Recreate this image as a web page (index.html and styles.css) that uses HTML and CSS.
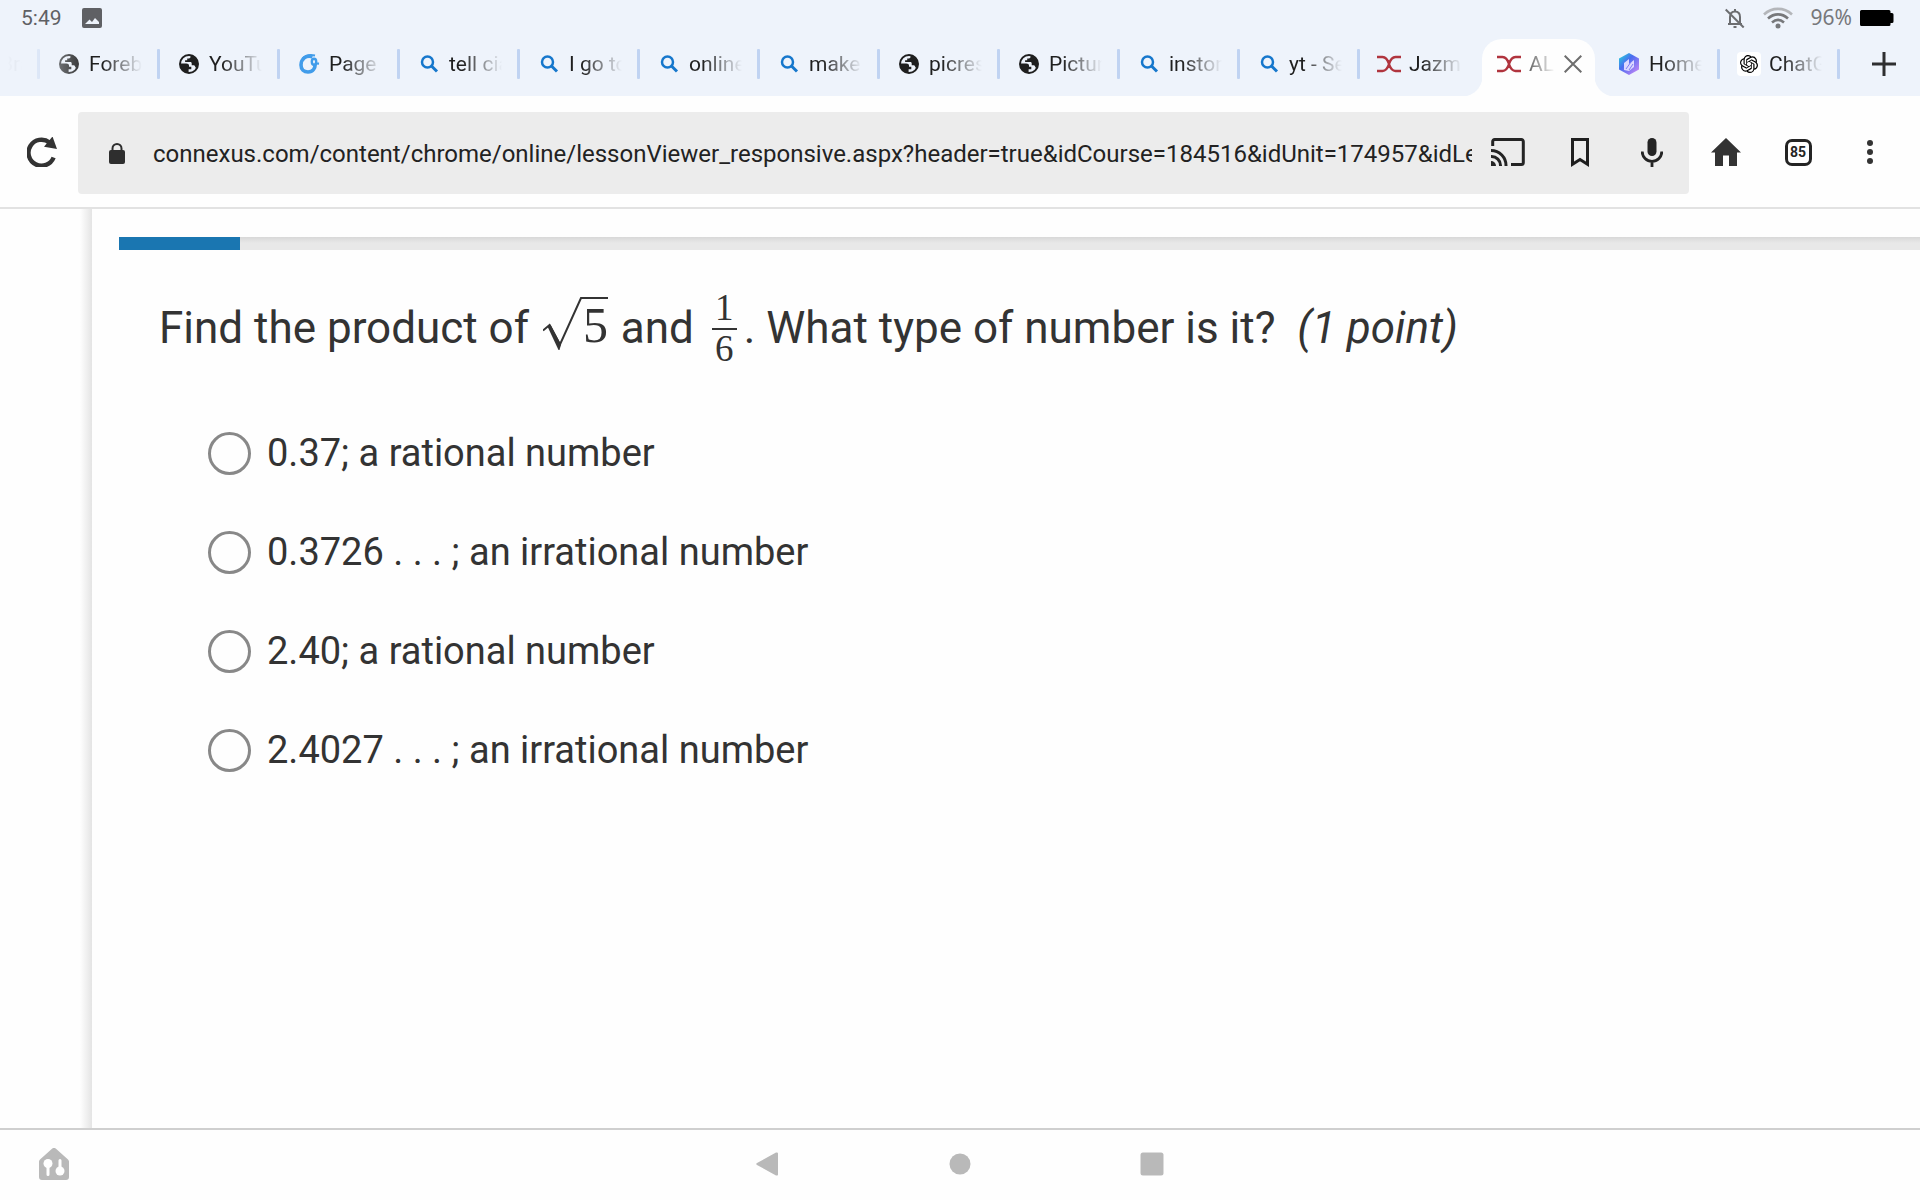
FILE: index.html
```html
<!DOCTYPE html>
<html lang="en">
<head>
<meta charset="utf-8">
<meta name="viewport" content="width=device-width, initial-scale=1">
<title>Lesson Viewer</title>
<link rel="stylesheet" href="styles.css">
</head>
<body>
<svg class="defs" aria-hidden="true">
  <symbol id="globe" viewBox="0 0 20 20">
    <circle cx="10" cy="10" r="9" fill="none" stroke="currentColor" stroke-width="2"/>
    <path fill="currentColor" d="M1 9.5h6.2c1.8 0 2.8.7 2.8 2v1.2h2.3v2.6H9.6V19C4 18.500 1 14.500 1 9.500zM11.500 1.200v1.600c0 1-.6 1.600-1.600 1.600H8.200v1.800H6.100v1.900h5.200c1 0 1.400.5 1.400 1.500v1.700h1.700c1 0 1.600.6 1.900 1.600l.9 1.400c1-1.400 1.700-2.900 1.700-4.800 0-4.300-3-8-7.500-8.800z"/>
  </symbol>
  <symbol id="search" viewBox="0 0 20 20">
    <circle cx="8.500" cy="8" r="5.500" fill="none" stroke="#1677cc" stroke-width="2.500"/>
    <path d="M12.500 12l5.500 5.500" stroke="#1677cc" stroke-width="3"/>
  </symbol>
  <symbol id="connexus" viewBox="0 0 24 20">
    <path d="M0 3h5.500c3 0 5 2.200 6.500 7 1.500-4.800 3.500-7 6.500-7H24M0 17h5.500c3 0 5-2.200 6.500-7 1.500 4.800 3.500 7 6.500 7H24" fill="none" stroke="#b0343e" stroke-width="2.400"/>
  </symbol>
</svg>

<header class="status">
  <div class="status-group">
    <span class="clock">5:49</span>
    <svg class="i20" viewBox="0 0 20 20"><path fill="#5f6064" fill-rule="evenodd" d="M2 0h16a2 2 0 0 1 2 2v16a2 2 0 0 1-2 2H2a2 2 0 0 1-2-2V2a2 2 0 0 1 2-2zM3 16h14v-2l-4-4-3 4-2.500-2.500z"/></svg>
  </div>
  <div class="status-group status-right">
    <svg class="i20" viewBox="0 0 20 20" fill="none" stroke="#6c6d70" stroke-width="2"><path d="M5 15.500V9c0-3.500 2-5.500 5-5.500s5 2 5 5.500v6.500M3 16h14M10 1v3M.7 1.500l18 18M8.500 19h3"/></svg>
    <svg class="wifi" viewBox="0 0 30 22" fill="none" stroke-width="2.600"><path stroke="#b4b6ba" d="M1 7.500C9 0 21 0 29 7.500"/><path stroke="#77787b" d="M5 11.500c6-5.500 14-5.500 20 0M9 15.500c4-3.500 8-3.500 12 0"/><circle cx="15" cy="19" r="2.500" fill="#77787b"/></svg>
    <span class="battery-text">96%</span>
    <svg class="battery" viewBox="0 0 34 16"><path d="M1.500 0H29a1.500 1.500 0 0 1 1.500 1.500V3H32a1.500 1.500 0 0 1 1.500 1.500v7A1.500 1.500 0 0 1 32 13h-1.500v1.500A1.500 1.500 0 0 1 29 16H1.500A1.500 1.500 0 0 1 0 14.500v-13A1.500 1.500 0 0 1 1.500 0z"/></svg>
  </div>
</header>

<nav class="strip" aria-label="Open tabs">
  <div class="tabs">
    <a class="tab tab-cut" href="#"><span class="tab-title">Bra</span></a>
    <a class="tab" href="#"><svg class="fav"><use href="#globe"/></svg><span class="tab-title">Forebo</span></a>
    <a class="tab" href="#"><svg class="fav"><use href="#globe"/></svg><span class="tab-title">YouTub</span></a>
    <a class="tab" href="#"><svg class="fav" viewBox="0 0 20 20" fill="none" stroke="#419cea"><path stroke-width="3.600" d="M13.500 2.800C7 .8 2 5 2 11c0 4.500 3 7 7 7 5 0 7.500-4 7-8"/><path stroke-width="2" d="M3.500 4.500C6 1.500 11 .5 16 1.500"/><ellipse cx="15" cy="7.800" rx="2.200" ry="3" stroke-width="2.400"/><path stroke-width="2.200" d="M16.500 9.500l3.500.2"/></svg><span class="tab-title">Page</span></a>
    <a class="tab" href="#"><svg class="fav"><use href="#search"/></svg><span class="tab-title">tell cia</span></a>
    <a class="tab" href="#"><svg class="fav"><use href="#search"/></svg><span class="tab-title">I go to</span></a>
    <a class="tab" href="#"><svg class="fav"><use href="#search"/></svg><span class="tab-title">online</span></a>
    <a class="tab" href="#"><svg class="fav"><use href="#search"/></svg><span class="tab-title">make</span></a>
    <a class="tab" href="#"><svg class="fav"><use href="#globe"/></svg><span class="tab-title">picres</span></a>
    <a class="tab" href="#"><svg class="fav"><use href="#globe"/></svg><span class="tab-title">Pictur</span></a>
    <a class="tab" href="#"><svg class="fav"><use href="#search"/></svg><span class="tab-title">instor</span></a>
    <a class="tab" href="#"><svg class="fav"><use href="#search"/></svg><span class="tab-title">yt - Se</span></a>
    <a class="tab no-sep" href="#"><svg class="fav"><use href="#connexus"/></svg><span class="tab-title">Jazm</span></a>
    <div class="tab active no-sep"><a class="tab-link" href="#" aria-current="page"><svg class="fav"><use href="#connexus"/></svg><span class="tab-title">AL</span></a><button class="close" type="button" aria-label="Close tab"><svg viewBox="0 0 18 18"><path d="M.7.7l16.600 16.600M17.300.7L.7 17.300" stroke="#6e6e6e" stroke-width="2"/></svg></button></div>
    <a class="tab" href="#"><svg class="fav fav-tall" viewBox="0 0 20 22"><defs><linearGradient id="hex" x1="0" y1="0" x2="1" y2="1"><stop offset="0" stop-color="#1fe0d8"/><stop offset=".4" stop-color="#4a6cf0"/><stop offset="1" stop-color="#d58af6"/></linearGradient></defs><path fill="url(#hex)" d="M10 0l10 5.500v11L10 22 0 16.500v-11z"/><path fill="#dcd8ff" d="M5 10l5-4v5l5-4v7l-5 4-5-1z"/><path stroke="#7d7cf4" d="M7 16l5-7M10 17l4-6"/></svg><span class="tab-title">Home</span></a>
    <a class="tab" href="#"><svg class="fav fav-tile" viewBox="0 0 24 24"><path d="M22.2819 9.8211a5.9847 5.9847 0 0 0-.5157-4.9108 6.0462 6.0462 0 0 0-6.5098-2.9A6.0651 6.0651 0 0 0 4.9807 4.1818a5.9847 5.9847 0 0 0-3.9977 2.9 6.0462 6.0462 0 0 0 .7427 7.0966 5.98 5.98 0 0 0 .511 4.9107 6.051 6.051 0 0 0 6.5146 2.9001A5.9847 5.9847 0 0 0 13.2599 24a6.0557 6.0557 0 0 0 5.7718-4.2058 5.9894 5.9894 0 0 0 3.9977-2.9001 6.0557 6.0557 0 0 0-.7475-7.0729zm-9.022 12.6081a4.4755 4.4755 0 0 1-2.8764-1.0408l.1419-.0804 4.7783-2.7582a.7948.7948 0 0 0 .3927-.6813v-6.7369l2.02 1.1686a.071.071 0 0 1 .038.0615v5.5826a4.504 4.504 0 0 1-4.4945 4.4944zm-9.6607-4.1254a4.4708 4.4708 0 0 1-.5346-3.0137l.142.0852 4.783 2.7582a.7712.7712 0 0 0 .7806 0l5.8428-3.3685v2.3324a.0804.0804 0 0 1-.0332.0615L9.74 19.9502a4.4992 4.4992 0 0 1-6.1408-1.6464zM2.3408 7.8956a4.485 4.485 0 0 1 2.3655-1.9728V11.6a.7664.7664 0 0 0 .3879.6765l5.8144 3.3543-2.0201 1.1685a.0757.0757 0 0 1-.071 0l-4.8303-2.7865A4.504 4.504 0 0 1 2.3408 7.872zm16.5963 3.8558L13.1038 8.364 15.1192 7.2a.0757.0757 0 0 1 .071 0l4.8303 2.7913a4.4944 4.4944 0 0 1-.6765 8.1042v-5.6772a.79.79 0 0 0-.407-.667zm2.0107-3.0231l-.142-.0852-4.7735-2.7818a.7759.7759 0 0 0-.7854 0L9.409 9.2297V6.8974a.0662.0662 0 0 1 .0284-.0615l4.8303-2.7866a4.4992 4.4992 0 0 1 6.6802 4.66zM8.3065 12.863l-2.02-1.1638a.0804.0804 0 0 1-.038-.0567V6.0742a4.4992 4.4992 0 0 1 7.3757-3.4537l-.142.0805L8.704 5.459a.7948.7948 0 0 0-.3927.6813zm1.0976-2.3654l2.602-1.4998 2.6069 1.4998v2.9994l-2.5974 1.4997-2.6067-1.4997Z"/></svg><span class="tab-title">ChatG</span></a>
  </div>
  <button class="new-tab" type="button" aria-label="New tab"><svg viewBox="0 0 24 24"><path d="M0 12h24M12 0v24" stroke="#2e2e30" stroke-width="3"/></svg></button>
</nav>

<div class="toolbar">
  <button class="tool" type="button" aria-label="Reload"><svg class="i30" viewBox="0 0 30 30"><path d="M26.600 20.500A13 13 0 1 1 22.500 5.500" fill="none" stroke="#333" stroke-width="4.400"/><path fill="#333" d="M25.500-.5l4.500 12.500L17 9.800z"/></svg></button>
  <div class="omnibox">
    <svg class="lock" viewBox="0 0 16 21"><path d="M3.500 8V5.500a4.500 4.500 0 0 1 9 0V8" fill="none" stroke="#2e2e2e" stroke-width="2"/><rect y="7" width="16" height="14" rx="2" fill="#2e2e2e"/></svg>
    <input class="url" type="text" aria-label="Address" value="connexus.com/content/chrome/online/lessonViewer_responsive.aspx?header=true&amp;idCourse=184516&amp;idUnit=174957&amp;idLesson=1">
    <button class="tool" type="button" aria-label="Cast"><svg class="cast" viewBox="0 0 34 28" fill="none" stroke="#242424" stroke-width="3"><path d="M1.700 8V3.500a2 2 0 0 1 2-2h26.600a2 2 0 0 1 2 2v21a2 2 0 0 1-2 2H20"/><path d="M0 12.500A15 15 0 0 1 15 28M0 18.500A9 9 0 0 1 9.500 28"/><path fill="#242424" stroke="none" d="M0 23a5 5 0 0 1 5 5H0z"/></svg></button>
    <button class="tool" type="button" aria-label="Bookmark"><svg class="bookmark" viewBox="0 0 18 29"><path d="M1.500 1.500h15v24.700L9 21.500l-7.500 4.700z" fill="none" stroke="#1f1f1f" stroke-width="3"/></svg></button>
    <button class="tool" type="button" aria-label="Voice search"><svg class="mic" viewBox="0 0 22 29"><rect x="6.500" width="9" height="18" rx="4.500" fill="#242424"/><path d="M1.200 13.500a9.800 9.800 0 0 0 19.600 0M11 23v6" fill="none" stroke="#242424" stroke-width="2.800"/></svg></button>
  </div>
  <div class="tools">
    <button class="tool" type="button" aria-label="Home"><svg class="i30" viewBox="0 0 30 30"><path fill="#333" d="M15 1l15 14.500h-4V29h-8V18.500h-6V29H4V15.500H0z"/></svg></button>
    <button class="tool" type="button" aria-label="85 open tabs"><span class="count">85</span></button>
    <button class="tool" type="button" aria-label="More"><svg class="dots" viewBox="0 0 6 24"><g fill="#333"><circle cx="3" cy="3" r="3"/><circle cx="3" cy="12" r="3"/><circle cx="3" cy="21" r="3"/></g></svg></button>
  </div>
</div>

<div class="page">
  <aside class="rail"></aside>
  <main class="lesson">
    <div class="progress" role="progressbar" aria-label="Lesson progress" aria-valuenow="7" aria-valuemin="0" aria-valuemax="100"><div class="progress-bar" style="width:6.7%"></div></div>
    <form class="question">
      <p class="prompt" id="prompt">Find the product of <span class="sqrt"><svg class="radical" viewBox="0 0 40 54"><path d="M0 33.500l6.500-5.500L17 47.500 38 1h2" fill="none" stroke="#333" stroke-width="2"/><path fill="#333" d="M4.500 29.500l3-2L18 47.500l-1.500 5.500h-1z"/></svg><span class="radicand">5</span></span> and <span class="frac"><span class="num">1</span><span class="den">6</span></span>. What type of number is it? &nbsp;<em>(1 point)</em></p>
      <div class="answers" role="radiogroup" aria-labelledby="prompt">
        <label class="answer"><input type="radio" name="answer" value="a"><span>0.37; a rational number</span></label>
        <label class="answer"><input type="radio" name="answer" value="b"><span>0.3726 . . . ; an irrational number</span></label>
        <label class="answer"><input type="radio" name="answer" value="c"><span>2.40; a rational number</span></label>
        <label class="answer"><input type="radio" name="answer" value="d"><span>2.4027 . . . ; an irrational number</span></label>
      </div>
    </form>
  </main>
</div>

<footer class="sysnav">
  <button class="sys" type="button" aria-label="Smart home"><svg class="house" viewBox="0 0 30 32"><path fill="#b9b9b9" d="M13 .8a3 3 0 0 1 4 0L29 11.500a3 3 0 0 1 1 2V29a3 3 0 0 1-3 3H3a3 3 0 0 1-3-3V13.500a3 3 0 0 1 1-2z"/><g fill="#fff"><circle cx="9" cy="15.500" r="4.500"/><circle cx="21" cy="23" r="4.500"/></g><path d="M9 16v10.500M21 12.500V22" stroke="#fff" stroke-width="3" stroke-linecap="round"/></svg></button>
  <div class="sys-main">
    <button class="sys" type="button" aria-label="Back"><svg viewBox="0 0 24 24"><path fill="#b9b9b9" d="M20 .6a1.300 1.300 0 0 1 2 1v20.800a1.300 1.300 0 0 1-2 1L1 13a1.200 1.200 0 0 1 0-2z"/></svg></button>
    <button class="sys" type="button" aria-label="Home screen"><svg viewBox="0 0 24 24"><circle cx="12" cy="12" r="10.500" fill="#b9b9b9"/></svg></button>
    <button class="sys" type="button" aria-label="Recent apps"><svg viewBox="0 0 24 24"><rect x=".5" y=".5" width="23" height="23" rx="2.500" fill="#b9b9b9"/></svg></button>
  </div>
</footer>
</body>
</html>
```
FILE: styles.css
```css
* { box-sizing: border-box; }

body {
  margin: 0;
  min-height: 100vh;
  display: flex;
  flex-direction: column;
  background: #fefefe;
  color: #333;
  font-family: Roboto, "Liberation Sans", sans-serif;
}

svg { display: block; flex: none; }
button { border: 0; padding: 0; background: none; font: inherit; color: inherit; }
a { color: inherit; text-decoration: none; }
.defs { width: 0; height: 0; position: absolute; }
.i20 { width: 20px; height: 20px; }
.i30 { width: 30px; height: 30px; }

/* Status bar */
.status {
  display: flex;
  justify-content: space-between;
  height: 36px;
  padding: 0 26px 0 21px;
  background: #eef3fb;
}
.status-group { display: flex; align-items: center; gap: 20px; }
.status-right { gap: 18px; }
.clock { font-size: 21px; color: #5f6064; }
.wifi { width: 30px; height: 22px; }
.battery-text { font-family: "Noto Sans", sans-serif; font-size: 21px; line-height: 32px; padding-bottom: 2px; color: #77787b; }
.battery { width: 34px; height: 16px; margin-left: -10px; }

/* Tab strip */
.strip { display: flex; height: 60px; background: #eef3fb; }
.tabs {
  flex: 1;
  display: grid;
  grid-template-columns: 40px repeat(15, minmax(0, 1fr));
  min-width: 0;
  mask-image: linear-gradient(to right, transparent 8px, #000 90px);
}
.tab {
  position: relative;
  min-width: 0;
  display: flex;
  align-items: center;
  gap: 8px;
  padding: 0 18px 4px 17px;
  font-size: 21px;
  color: #1f1f1f;
}
.tab::after {
  content: "";
  position: absolute;
  right: 0;
  top: 13px;
  width: 3px;
  height: 30px;
  border-radius: 1px;
  background: #c0d3f2;
}
.tab-cut { padding: 0 18px 4px 0; }
.fav { width: 24px; height: 20px; }
.fav-tall { height: 22px; }
.fav-tile { height: 24px; padding: 3px; border-radius: 4px; background: #fff; }
.tab-title {
  flex: 1;
  min-width: 0;
  overflow: hidden;
  white-space: nowrap;
  mask-image: linear-gradient(to right, #000 25%, transparent);
}
.no-sep::after { display: none; }
.active { padding: 0; gap: 0; }
.active::before {
  content: "";
  position: absolute;
  z-index: -1;
  left: 2px;
  right: 5px;
  top: 3px;
  bottom: 0;
  border-radius: 20px 20px 0 0;
  background: #fefefe;
}
.active::after {
  display: block;
  z-index: -1;
  left: -18px;
  right: -15px;
  top: auto;
  bottom: 0;
  width: auto;
  height: 20px;
  border-radius: 0;
  background:
    radial-gradient(circle at 0 0, transparent 20px, #fefefe 21px) left / 20px 20px no-repeat,
    radial-gradient(circle at 100% 0, transparent 20px, #fefefe 21px) right / 20px 20px no-repeat;
}
.tab-link {
  flex: 1;
  min-width: 0;
  display: flex;
  align-items: center;
  gap: 8px;
  padding: 0 0 4px 17px;
}
.active .tab-title { color: #666; mask-image: linear-gradient(to right, #000, transparent); }
.close { width: 18px; height: 18px; margin: 0 18px 4px 9px; }
.new-tab { width: 80px; padding: 0 0 4px 32px; }
.new-tab svg { width: 24px; height: 24px; }

/* Toolbar */
.toolbar {
  display: flex;
  padding: 16px 14px 13px 6px;
  border-bottom: 2px solid #e2e2e2;
}
.tool {
  width: 72px;
  flex: none;
  display: flex;
  align-items: center;
  justify-content: center;
  padding-bottom: 2px;
}
.omnibox {
  flex: 1;
  min-width: 0;
  display: flex;
  align-items: center;
  height: 82px;
  margin-right: 1px;
  padding: 0 1px 0 31px;
  border-radius: 4px;
  background: #ececec;
}
.lock { width: 16px; height: 21px; }
.url {
  flex: 1;
  min-width: 0;
  margin-left: 28px;
  padding: 1px 0 0;
  border: 0;
  background: none;
  color: #222;
  font: 24px/32px Roboto, "Liberation Sans", sans-serif;
}
.cast { width: 34px; height: 28px; }
.bookmark { width: 18px; height: 29px; }
.mic { width: 22px; height: 29px; }
.tools { display: flex; }
.count {
  width: 27px;
  height: 27px;
  border: 3px solid #242424;
  border-radius: 7px;
  font-size: 14px;
  line-height: 21px;
  font-weight: 700;
  color: #242424;
}
.dots { width: 6px; height: 24px; }

/* Lesson page */
.page { flex: 1; display: flex; }
.rail {
  width: 92px;
  background: linear-gradient(to left, #e4e4e4, #fefefe 12px);
}
.lesson { flex: 1; min-width: 0; padding: 28px 0 40px 27px; }
.progress {
  height: 13px;
  background: linear-gradient(#d8d8d8, #e8e8e8 6px);
}
.progress-bar { height: 100%; background: #1a76b1; }
.question { padding: 38px 40px 0; }
.prompt { margin: 0; font-size: 44px; line-height: 72px; }
.sqrt, .frac {
  display: inline-flex;
  font-family: "Liberation Serif", serif;
}
.sqrt {
  margin: 0 2px 0 3px;
  vertical-align: -8px;
  align-items: flex-start;
  line-height: 52px;
  font-size: 50px;
}
.radical { width: 40px; height: 54px; }
.radicand { border-top: 2px solid #333; }
.frac {
  flex-direction: column;
  vertical-align: middle;
  text-align: center;
  font-size: 37px;
  padding: 0 7px 6px;
}
.num { width: 25px; line-height: 40px; }
.den { width: 25px; border-top: 2px solid #333; line-height: 38px; }
.answers { display: flex; flex-direction: column; gap: 55px; padding: 57px 0 0 49px; }
.answer { display: flex; align-items: center; gap: 16px; font-size: 38px; line-height: 44px; }
.answer input {
  appearance: none;
  flex: none;
  width: 43px;
  height: 43px;
  margin: 0;
  border: 3px solid #888;
  border-radius: 50%;
}

/* System navigation */
.sysnav {
  display: grid;
  grid-template-columns: 1fr auto 1fr;
  align-items: center;
  height: 72px;
  padding-bottom: 2px;
  border-top: 2px solid #cfcfcf;
}
.sysnav > .sys { justify-self: start; margin-left: 39px; }
.house { width: 30px; height: 32px; }
.sys-main { display: flex; gap: 168px; }
.sys-main svg { width: 24px; height: 24px; }
```
